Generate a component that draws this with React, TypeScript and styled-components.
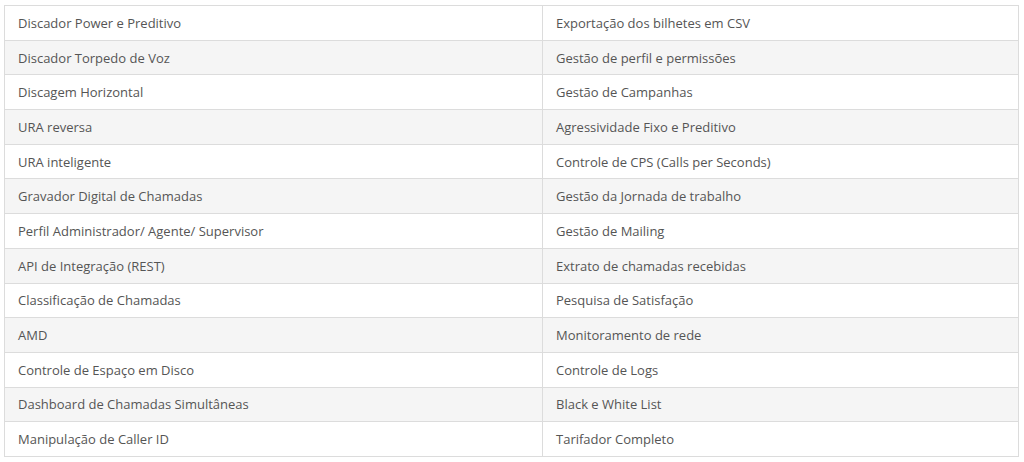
import React from "react";
import styled, { createGlobalStyle } from "styled-components";

const Global = createGlobalStyle`
  html, body { margin: 0; padding: 0; background: #ffffff; }
  body { font-family: "Open Sans", "Liberation Sans", sans-serif; }
`;

const Page = styled.div`
  padding: 5px 6px 0 4px;
`;

const Table = styled.table`
  width: 1014px;
  border-collapse: collapse;
  border: 1px solid #dcdcdc;
  table-layout: fixed;
`;

const Row = styled.tr<{ $alt: boolean }>`
  background: ${(p) => (p.$alt ? "#f5f5f5" : "#ffffff")};
  height: 34.69px;
`;

const Cell = styled.td<{ $w: number }>`
  width: ${(p) => p.$w}px;
  border: 1px solid #dcdcdc;
  padding: 0 13px;
  font-size: 13px;
  color: #555555;
  line-height: 18px;
  box-sizing: border-box;
  white-space: nowrap;
`;

const rows: [string, string][] = [
  ["Discador Power e Preditivo", "Exportação dos bilhetes em CSV"],
  ["Discador Torpedo de Voz", "Gestão de perfil e permissões"],
  ["Discagem Horizontal", "Gestão de Campanhas"],
  ["URA reversa", "Agressividade Fixo e Preditivo"],
  ["URA inteligente", "Controle de CPS (Calls per Seconds)"],
  ["Gravador Digital de Chamadas", "Gestão da Jornada de trabalho"],
  ["Perfil Administrador/ Agente/ Supervisor", "Gestão de Mailing"],
  ["API de Integração (REST)", "Extrato de chamadas recebidas"],
  ["Classificação de Chamadas", "Pesquisa de Satisfação"],
  ["AMD", "Monitoramento de rede"],
  ["Controle de Espaço em Disco", "Controle de Logs"],
  ["Dashboard de Chamadas Simultâneas", "Black e White List"],
  ["Manipulação de Caller ID", "Tarifador Completo"],
];

export default function App() {
  return (
    <Page>
      <Global />
      <Table>
        <tbody>
          {rows.map(([a, b], i) => (
            <Row key={i} $alt={i % 2 === 1}>
              <Cell $w={538}>{a}</Cell>
              <Cell $w={476}>{b}</Cell>
            </Row>
          ))}
        </tbody>
      </Table>
    </Page>
  );
}
